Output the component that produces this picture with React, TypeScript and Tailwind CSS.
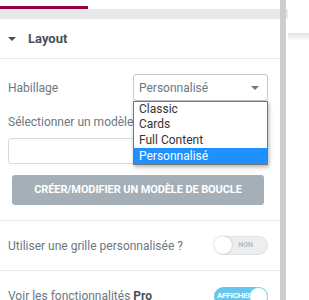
const Caret = ({ className }: { className?: string }) => (
  <svg width="8" height="4" viewBox="0 0 8 4" className={className}>
    <path d="M0 0h8L4 4z" fill="currentColor" />
  </svg>
);

const Switch = ({ on, label }: { on: boolean; label: string }) =>
  on ? (
    <div className="relative w-[54px] h-[19px] rounded-full bg-[#66c6ee] flex items-center pl-[3px] overflow-hidden">
      <span className="text-[8px] font-bold text-white leading-none tracking-[-0.2px]">{label}</span>
      <span className="absolute right-0 top-0 w-[19px] h-[19px] rounded-full bg-white border border-[#8ad3f0]" />
    </div>
  ) : (
    <div className="relative w-[54px] h-[19px] rounded-full bg-[#eceef0] border border-[#dfe2e5] flex items-center justify-end pr-[14px]">
      <span className="text-[7px] font-bold text-[#b4bcc2] leading-none">{label}</span>
      <span className="absolute left-0 top-0 w-[18px] h-[18px] -mt-px -ml-px rounded-full bg-white shadow-[0_0_2px_rgba(0,0,0,0.25)]" />
    </div>
  );

export default function App() {
  return (
    <div className="w-[309px] h-[300px] bg-white overflow-hidden flex font-['Roboto',sans-serif]">
      <div className="w-[280px] shrink-0">
        <div className="h-[6px]" />
        <div className="h-[3px] w-[88px] bg-[#93003c]" />
        <div className="h-[10px] bg-[#e6e8ea]" />

        <div className="h-[40px] flex items-center px-2 border-b border-[#e6e9ec]">
          <Caret className="text-[#495157] mr-[12px]" />
          <span className="text-[13px] font-bold text-[#495157]">Layout</span>
        </div>

        <div className="relative pl-2 pr-3 pt-[15px] pb-[15px] border-b border-[#e6e9ec]">
          <div className="flex items-center justify-between h-[27px]">
            <span className="text-[12px] text-[#6d7882]">Habillage</span>
            <div className="w-[135px] h-[27px] rounded-[3px] border border-[#c5cacf] flex items-center justify-between pl-[5px] pr-[8px]">
              <span className="text-[12px] text-[#6d7882]">Personnalisé</span>
              <Caret className="text-[#6d7882]" />
            </div>
          </div>

          <div className="mt-[13px] h-[16px] leading-[16px] text-[12px] text-[#6d7882]">
            Sélectionner un modèle
          </div>
          <div className="mt-[8px] h-[26px] rounded-[3px] border border-[#d5dadf]" />

          <button className="block mt-[11px] mx-1 w-[252px] h-[30px] rounded-[3px] bg-[#a4afb7] text-white text-[11px] font-bold uppercase tracking-[-0.1px]">
            Créer/Modifier un modèle de boucle
          </button>

          <div className="absolute left-[133px] top-[42px] w-[135px] bg-white border border-[#767676] shadow-[1px_2px_4px_rgba(0,0,0,0.3)] text-[12px] text-[#333] leading-[15px]">
            <div className="px-[5px] h-[15px]">Classic</div>
            <div className="px-[5px] h-[15px]">Cards</div>
            <div className="px-[5px] h-[16px] leading-[16px]">Full Content</div>
            <div className="px-[5px] h-[16px] leading-[16px] bg-[#1e90ff] text-white">Personnalisé</div>
          </div>
        </div>

        <div className="h-[50px] flex items-center justify-between pl-2 pr-3 border-b border-[#e6e9ec]">
          <span className="text-[12px] text-[#6d7882]">Utiliser une grille personnalisée ?</span>
          <Switch on={false} label="NON" />
        </div>

        <div className="h-[50px] flex items-center justify-between pl-2 pr-3">
          <span className="text-[12px] text-[#6d7882]">
            Voir les fonctionnalités <b className="text-[#495157]">Pro</b>
          </span>
          <Switch on label="AFFICHER" />
        </div>
      </div>

      <div className="w-[6px] shrink-0 bg-[#cdcdcd]" />
      <div className="w-[2px] shrink-0">
        <div className="h-[9px]" />
        <div className="h-[10px] bg-[#e6e8ea]" />
      </div>

      <div className="flex-1">
        <div className="h-[33px] bg-white" />
        <div className="h-[8px] bg-gradient-to-b from-[#e2e3ea] to-white" />
      </div>
    </div>
  );
}
